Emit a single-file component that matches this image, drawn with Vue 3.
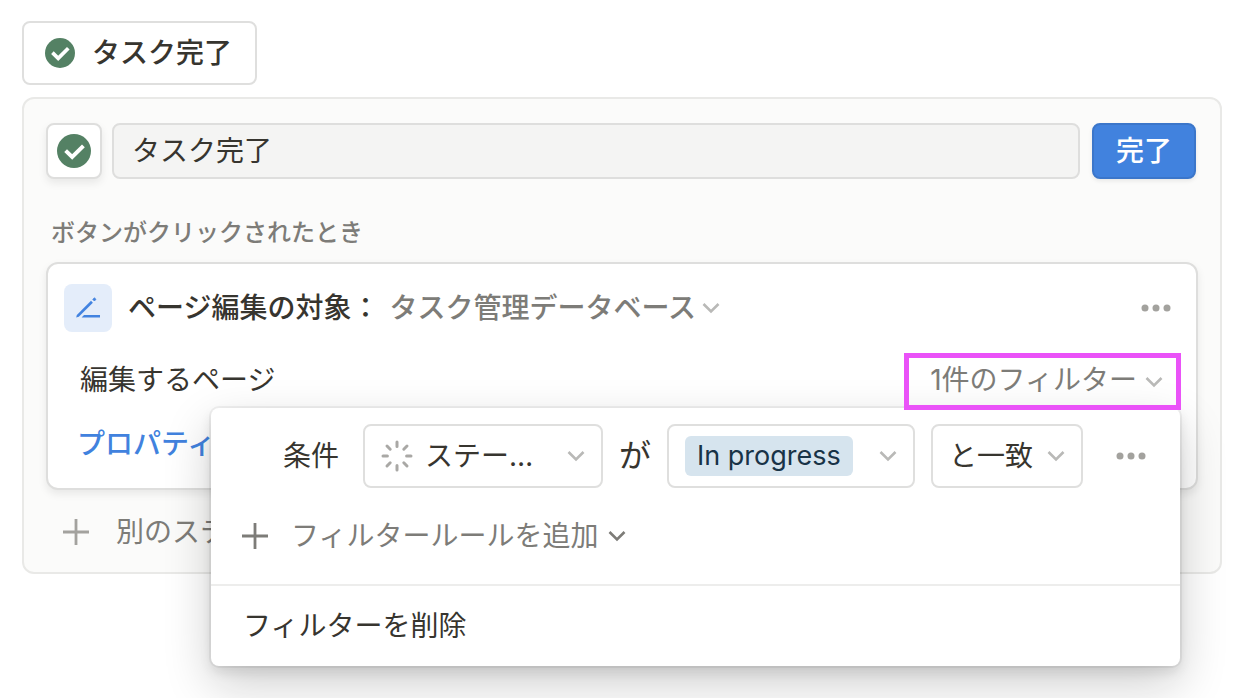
<script setup>
import { ref } from 'vue'

const name = ref('タスク完了')
const database = ref('タスク管理データベース')
const property = ref('ステータス')
const status = ref('In progress')
const operator = ref('と一致')
</script>

<template>
  <main class="page">
    <button type="button" class="trigger">
      <svg class="check-small" viewBox="0 0 30 30" aria-hidden="true">
        <circle cx="15" cy="15" r="15" fill="#548164" />
        <path d="M7.4 14.6 13.2 20.3 23.3 10.2" fill="none" stroke="#fff" stroke-width="3.7" />
      </svg>
      <span>タスク完了</span>
    </button>

    <section class="panel">
      <div class="name-row">
        <button type="button" class="icon-button" aria-label="アイコン">
          <svg class="check-large" viewBox="0 0 30 30" aria-hidden="true">
            <circle cx="15" cy="15" r="15" fill="#548164" />
            <path d="M7.6 14.6 13.4 20.3 23.3 10.4" fill="none" stroke="#fff" stroke-width="3.5" />
          </svg>
        </button>
        <input v-model="name" class="name-input" type="text" aria-label="ボタン名" />
        <button type="button" class="done">完了</button>
      </div>

      <h2 class="caption">ボタンがクリックされたとき</h2>

      <div class="card">
        <div class="card-head">
          <span class="edit-badge">
            <svg viewBox="0 0 48 48" aria-hidden="true">
              <path d="M12.2 33.6 12.8 31 27 16.8 28.9 18.7 14.8 32.8Z" fill="#4283e0" />
              <path d="M28.8 15.4 30.4 13.8 32 15.4 30.4 17Z" fill="#4283e0" stroke="#4283e0" stroke-width="0.8" stroke-linejoin="round" />
              <path d="M17.6 33.4 20 31H36V33.4Z" fill="#4283e0" />
            </svg>
          </span>
          <label class="card-title" for="database">ページ編集の対象：</label>
          <span class="plain-select">
            <select id="database" v-model="database">
              <option>タスク管理データベース</option>
            </select>
            <svg class="chevron" viewBox="0 0 18 12" aria-hidden="true"><path d="M1.5 2 9 9.5 16.5 2" /></svg>
          </span>
          <button type="button" class="more head-more" aria-label="その他">
            <svg viewBox="0 0 30 8" aria-hidden="true"><circle cx="4" cy="4" r="3.5" /><circle cx="15" cy="4" r="3.5" /><circle cx="26" cy="4" r="3.5" /></svg>
          </button>
        </div>

        <div class="filter-row">
          <span class="row-text">編集するページ</span>
          <button type="button" class="filter-toggle" aria-expanded="true">
            <span class="row-text">1件のフィルター</span>
            <svg class="chevron" viewBox="0 0 18 12" aria-hidden="true"><path d="M1.5 2 9 9.5 16.5 2" /></svg>
          </button>

          <div class="popover" role="dialog" aria-label="フィルター">
            <div class="rule">
              <label class="where" for="property">条件</label>
              <span class="field property">
                <svg class="status-icon" viewBox="0 0 32 32" aria-hidden="true">
                  <path d="M16 2V6.4M16 25.6V30M2 16H6.4M25.6 16H30M6 6 9.2 9.2M22.8 22.8 26 26M6 26 9.2 22.8M22.8 9.2 26 6" />
                </svg>
                <select id="property" v-model="property">
                  <option>ステータス</option>
                </select>
                <svg class="chevron" viewBox="0 0 18 12" aria-hidden="true"><path d="M1.5 2 9 9.5 16.5 2" /></svg>
              </span>
              <label class="particle" for="status">が</label>
              <span class="field status">
                <select id="status" v-model="status" class="tag">
                  <option>In progress</option>
                </select>
                <svg class="chevron" viewBox="0 0 18 12" aria-hidden="true"><path d="M1.5 2 9 9.5 16.5 2" /></svg>
              </span>
              <span class="field operator">
                <select v-model="operator" aria-label="演算子">
                  <option>と一致</option>
                </select>
                <svg class="chevron" viewBox="0 0 18 12" aria-hidden="true"><path d="M1.5 2 9 9.5 16.5 2" /></svg>
              </span>
              <button type="button" class="more rule-more" aria-label="ルールの操作">
                <svg viewBox="0 0 30 8" aria-hidden="true"><circle cx="4" cy="4" r="3.5" /><circle cx="15" cy="4" r="3.5" /><circle cx="26" cy="4" r="3.5" /></svg>
              </button>
            </div>
            <button type="button" class="add-rule">
              <svg class="plus" viewBox="0 0 28 28" aria-hidden="true"><path d="M14 1V27M1 14H27" /></svg>
              <span>フィルタールールを追加</span>
              <svg class="chevron" viewBox="0 0 18 12" aria-hidden="true"><path d="M1.5 2 9 9.5 16.5 2" /></svg>
            </button>
            <button type="button" class="remove">フィルターを削除</button>
          </div>
        </div>

        <button type="button" class="edit-property">プロパティ</button>
      </div>

      <button type="button" class="add-step">
        <svg class="plus" viewBox="0 0 28 28" aria-hidden="true"><path d="M14 1V27M1 14H27" /></svg>
        <span>別のステ</span>
      </button>
    </section>
  </main>
</template>

<style>
body {
  margin: 0;
  background: #fff;
}
</style>

<style scoped>
.page {
  box-sizing: border-box;
  min-height: 100vh;
  padding: 21px 20px 32px 22px;
  color: #37352f;
  font-family: Inter, "Noto Sans CJK JP", sans-serif;
  font-size: 28px;
  line-height: 40px;
}

.page *,
.page *::before {
  box-sizing: border-box;
}

button,
input,
select {
  margin: 0;
  padding: 0;
  border: 0;
  background: none;
  color: inherit;
  font: inherit;
  appearance: none;
}

svg {
  display: block;
  flex: none;
}

.trigger {
  display: flex;
  align-items: center;
  gap: 17px;
  height: 64px;
  padding: 0 23px 0 21px;
  border: 2px solid #dfdfde;
  border-radius: 8px;
  background: #fff;
  font-weight: 500;
}

.check-small {
  width: 30px;
  height: 30px;
}

.check-large {
  width: 34px;
  height: 34px;
}

.panel {
  margin-top: 12px;
  padding: 24px 22px 12px;
  border: 2px solid #e9e9e7;
  border-radius: 12px;
  background: #fbfbfa;
}

.name-row {
  display: flex;
  gap: 12px;
  padding-right: 2px;
}

.icon-button {
  display: flex;
  flex: none;
  align-items: center;
  justify-content: center;
  width: 56px;
  height: 56px;
  margin-right: -2px;
  border: 2px solid #dededd;
  border-radius: 8px;
  background: #fff;
  box-shadow: 0 4px 8px rgba(15, 15, 15, 0.08);
}

.name-input {
  flex: 1;
  min-width: 0;
  height: 56px;
  padding: 0 18px 4px;
  border: 2px solid #dededd;
  border-radius: 8px;
  background: #f4f4f3;
}

.done {
  flex: none;
  width: 104px;
  height: 56px;
  border: 2px solid #3b76ca;
  border-radius: 8px;
  background: #4182de;
  box-shadow: 0 2px 4px rgba(15, 15, 15, 0.08);
  color: #fff;
  font-weight: 500;
}

.caption {
  margin: 36px 0 12px;
  padding-left: 5px;
  color: #7d7c78;
  font-size: 24px;
  font-weight: 500;
  line-height: 35px;
}

.card {
  padding: 20px 16px 10px;
  border: 2px solid #dededd;
  border-radius: 12px;
  background: #fff;
  box-shadow: 0 4px 8px rgba(15, 15, 15, 0.08);
}

.card-head {
  display: flex;
  align-items: center;
  height: 48px;
}

.edit-badge {
  flex: none;
  width: 48px;
  margin-right: 16px;
  border-radius: 8px;
  background: #e4edfa;
}

.card-title {
  font-weight: 500;
}

.plain-select {
  display: flex;
  align-items: center;
  gap: 4px;
  margin-left: 10px;
  color: #7d7c78;
  font-weight: 500;
}

.chevron {
  width: 18px;
  height: 12px;
  fill: none;
  stroke: #b9b9b7;
  stroke-width: 2.6;
}

.more {
  display: flex;
  flex: none;
  align-items: center;
  justify-content: center;
  width: 48px;
  height: 48px;
}

.more svg {
  width: 30px;
  height: 8px;
  fill: #a3a29e;
}

.head-more {
  margin-left: auto;
}

.rule-more {
  margin-left: 8px;
}

.filter-row {
  position: relative;
  display: flex;
  align-items: center;
  justify-content: space-between;
  height: 57px;
  margin-top: 21px;
  margin-right: -1px;
  padding-left: 16px;
}

.row-text {
  padding-bottom: 4px;
}

.filter-toggle {
  position: relative;
  z-index: 2;
  display: flex;
  align-items: center;
  gap: 8px;
  height: 57px;
  padding: 0 13px 0 21px;
  border: 5px solid #ea52f8;
  color: #7d7c78;
}

.popover {
  position: absolute;
  z-index: 1;
  top: 55px;
  right: 1px;
  left: 147px;
  padding-top: 16px;
  border-radius: 8px;
  background: #fff;
  box-shadow:
    0 0 0 2px rgba(15, 15, 15, 0.05),
    0 6px 12px rgba(15, 15, 15, 0.1),
    0 18px 48px rgba(15, 15, 15, 0.2);
}

.rule {
  display: flex;
  align-items: center;
  gap: 16px;
  padding: 0 16px 0 72px;
}

.where {
  margin-right: 8px;
}

.particle {
  font-size: 32px;
}

.field {
  display: flex;
  align-items: center;
  justify-content: space-between;
  height: 64px;
  padding: 0 16px;
  border: 2px solid #dfdfde;
  border-radius: 8px;
}

.property {
  flex: none;
  width: 240px;
}

.property select {
  width: 110px;
  margin: 0 auto 0 12px;
  overflow: hidden;
  text-overflow: ellipsis;
  white-space: nowrap;
}

.status-icon {
  width: 32px;
  height: 32px;
  fill: none;
  stroke: #a9a8a5;
  stroke-linecap: round;
  stroke-width: 3;
}

.status {
  gap: 26px;
}

.tag {
  height: 40px;
  padding: 0 12px;
  border-radius: 6px;
  background: #d6e4ee;
  color: #183347;
  font-size: 27px;
}

.operator {
  gap: 13px;
}

.add-rule {
  display: flex;
  align-items: center;
  width: 100%;
  height: 98px;
  padding-left: 30px;
  border-bottom: 2px solid #ededec;
  color: #7d7c78;
}

.add-rule .plus {
  margin-right: 22px;
  stroke: #7d7c78;
}

.add-rule .chevron {
  margin-left: 10px;
  stroke: #7d7c78;
}

.plus {
  width: 28px;
  height: 28px;
  stroke: #a3a29e;
  stroke-width: 2.8;
}

.remove {
  display: block;
  width: 100%;
  height: 80px;
  padding-left: 32px;
  text-align: left;
}

.edit-property {
  display: block;
  height: 68px;
  padding-left: 13px;
  color: #4182de;
  font-weight: 500;
}

.add-step {
  display: flex;
  align-items: center;
  gap: 26px;
  height: 56px;
  margin-top: 14px;
  padding-left: 16px;
  color: #7d7c78;
}
</style>
